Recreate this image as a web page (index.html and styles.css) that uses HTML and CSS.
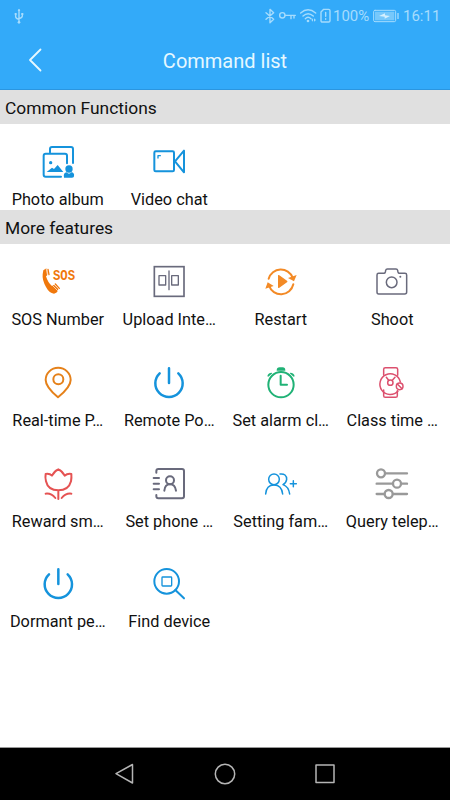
FILE: index.html
```html
<!DOCTYPE html>
<html lang="en">
<head>
    <meta charset="UTF-8">
    <meta name="viewport" content="width=device-width, initial-scale=1.0">
    <title>Command list</title>
    <link rel="stylesheet" href="styles.css">
</head>
<body>

    <!-- Status bar and title -->
    <header class="header">
        <div class="status-bar">
            <svg class="usb" width="10" height="16" viewBox="0 0 30 48"><path d="M15 5V43M5 20V26Q5 31 15 34M25 17V24Q25 29 15 32"/><path class="solid" d="M15 2l4 7h-8zM2 15h6v6h-6zM22 15h6v6h-6z"/><circle class="solid" cx="15" cy="43" r="4"/></svg>
            <div class="status-right">
                <svg width="10" height="16" viewBox="0 0 30 48"><path d="M3 14L26 34L15 44V4L26 14L3 34"/></svg>
                <svg class="key" width="17" height="16" viewBox="0 0 51 48"><circle cx="10" cy="22" r="8"/><path d="M18 22H49M36 22V32M45 22V30"/></svg>
                <svg class="wifi" width="17" height="16" viewBox="0 0 51 48"><path d="M2 15Q24-4 47 15M9 24Q24 10 40 24M16 32Q24 24 33 32"/><circle class="solid" cx="24" cy="39" r="4"/><path class="solid" d="M34 36l5-5v10zM42 31l6 5-6 5z"/></svg>
                <svg class="sim" width="11" height="16" viewBox="0 0 33 48"><path d="M11 4H26Q30 4 30 8V38Q30 42 26 42H7Q3 42 3 38V12ZM17 13V25M17 32V34"/></svg>
                <span class="percent">100%</span>
                <svg class="battery" width="26" height="14" viewBox="0 0 78 42"><rect x="2" y="4" width="66" height="34" rx="4"/><rect class="level" x="6" y="8" width="58" height="26"/><path class="solid" d="M73 12h4v18h-4z"/><path class="bolt" d="M18 21L36 13V19L51 21L35 29V23Z"/></svg>
                <span class="clock">16:11</span>
            </div>
        </div>
        <div class="title-bar">
            <svg class="back" width="14" height="24" viewBox="0 0 14 24"><path d="M12.5 1.5L2 12L12.5 22.5"/></svg>
            <h1>Command list</h1>
        </div>
    </header>

    <main>
        <!-- Common functions -->
        <h2>Common Functions</h2>
        <div class="grid common">
            <div class="item">
                <svg class="icon blue" viewBox="0 0 96 96"><path d="M24 19V9Q24 3 30 3H87Q93 3 93 9V51M57 92H11Q5 92 5 86V29Q5 23 11 23H69Q75 23 75 29V52"/><circle class="fill" cx="26" cy="50" r="5"/><path class="fill" d="M14 78L30 65L36 69L47 57L64 78ZM66 95Q63 80 74 79Q81 87 88 79Q98 80 96 91Q96 95 90 95Z"/><circle class="fill" cx="81" cy="69" r="11"/></svg>
                <span>Photo album</span>
            </div>
            <div class="item">
                <svg class="icon blue" viewBox="0 0 96 96"><rect x="4" y="16" width="59" height="60" rx="4"/><path d="M66 46L93 14V79Z"/><path class="thin" d="M15 36V29H22"/></svg>
                <span>Video chat</span>
            </div>
        </div>

        <!-- More features -->
        <h2>More features</h2>
        <div class="grid more">
            <div class="item">
                <svg class="icon deep-orange" viewBox="0 0 96 96"><path class="fill" d="M4 13L11 8Q14 7 15 11L17 25Q17 28 12 31Q18 51 30 60L36 56L49 69Q47 81 36 83Q22 82 12 63Q0 42 2 25Z"/><path class="cut" d="M13 10L17 29M33 60L47 74"/><path class="thin" d="M18 10L21 26M40 54L52 67"/><text x="33" y="43" textLength="66" lengthAdjust="spacingAndGlyphs">SOS</text></svg>
                <span>SOS Number</span>
            </div>
            <div class="item">
                <svg class="icon gray" viewBox="0 0 96 96"><rect class="frame" x="4" y="2" width="89" height="89"/><path class="thin" d="M18 29H38V57H18ZM56 29H76V57H56ZM48 15V71"/></svg>
                <span>Upload Inte…</span>
            </div>
            <div class="item">
                <svg class="icon orange" viewBox="0 0 96 96"><path d="M11 38A38 38 0 0 1 83 35M85 55A38 38 0 0 1 12 59"/><path class="fill" d="M69 36L95 27L87 46ZM1 68L8 49L26 60ZM39 28Q39 26 43 28L66 44Q69 47 66 49L43 65Q39 67 39 64Z"/></svg>
                <span>Restart</span>
            </div>
            <div class="item">
                <svg class="icon gray thin-line" viewBox="0 0 96 96"><path d="M8 22H24Q27 22 28 18L29 13Q30 9 34 9H60Q64 9 65 13L66 18Q67 22 70 22H87Q92 22 92 27V78Q92 84 86 84H8Q3 84 3 78V27Q3 22 8 22Z"/><circle cx="47" cy="49" r="16"/><circle class="fill" cx="73" cy="32" r="3"/></svg>
                <span>Shoot</span>
            </div>
            <div class="item">
                <svg class="icon amber" viewBox="0 0 96 96"><path d="M48 91Q11 60 11 39A37 36 0 0 1 86 39Q86 60 48 91Z"/><circle cx="49" cy="37" r="15"/></svg>
                <span>Real-time P…</span>
            </div>
            <div class="item">
                <svg class="icon blue power" viewBox="0 0 96 96"><path d="M20 19A41 41 0 1 0 76 19M48 4V48"/></svg>
                <span>Remote Po…</span>
            </div>
            <div class="item">
                <svg class="icon green" viewBox="0 0 96 96"><circle cx="48" cy="53" r="38"/><path d="M47 26V53H66"/><path class="fill" d="M35 11Q35 1 44 1H53Q61 1 61 11ZM7 28Q9 17 20 17L22 19L10 29ZM89 28Q87 17 76 17L74 19L86 29Z"/></svg>
                <span>Set alarm cl…</span>
            </div>
            <div class="item">
                <svg class="icon pink thin-line" viewBox="0 0 96 96"><path d="M23 24V7Q23 2 28 2H60Q65 2 65 7V25M23 69V86Q23 91 28 91H59Q64 91 64 86V71"/><path d="M66 72A31 31 0 1 1 73 45"/><circle cx="43" cy="47" r="8"/><path d="M31 31L38 40M57 31L49 40"/><circle cx="71" cy="58" r="10"/><path d="M64 51L78 65"/></svg>
                <span>Class time …</span>
            </div>
            <div class="item">
                <svg class="icon red" viewBox="0 0 96 96"><path d="M11 18Q23 16 30 23Q37 9 49 4Q61 9 68 23Q76 16 88 18Q89 28 87 40Q80 67 49 67Q18 67 12 40Q9 28 11 18ZM49 67V93M11 77Q28 75 40 90M88 77Q71 75 59 90"/></svg>
                <span>Reward sm…</span>
            </div>
            <div class="item">
                <svg class="icon gray" viewBox="0 0 96 96"><path d="M10 14V9Q10 3 16 3H87Q93 3 93 9V85Q93 91 87 91H16Q10 91 10 85V81M2 30H18M2 47H18M2 64H18"/><circle cx="51" cy="37" r="12"/><path d="M34 68Q36 49 51 49Q66 49 69 68"/></svg>
                <span>Set phone …</span>
            </div>
            <div class="item">
                <svg class="icon blue thin-line" viewBox="0 0 96 96"><circle cx="27" cy="34" r="16"/><path d="M2 78Q4 51 27 51Q50 51 53 78M45 18Q65 16 65 34Q64 44 54 50Q71 56 74 78M76 47H94M85 38V56"/></svg>
                <span>Setting fam…</span>
            </div>
            <div class="item">
                <svg class="icon silver" viewBox="0 0 96 96"><path d="M28 16H93M2 47H50M76 47H93M2 78H25M51 78H93"/><circle cx="15" cy="16" r="12"/><circle cx="63" cy="47" r="12"/><circle cx="38" cy="78" r="12"/></svg>
                <span>Query telep…</span>
            </div>
            <div class="item">
                <svg class="icon blue power" viewBox="0 0 96 96"><path d="M21 19A41 41 0 1 0 77 19M49 4V48"/></svg>
                <span>Dormant pe…</span>
            </div>
            <div class="item">
                <svg class="icon blue" viewBox="0 0 96 96"><circle cx="41" cy="40" r="37"/><path d="M67 66L93 91"/><rect class="thin" x="27" y="27" width="29" height="27" rx="2"/></svg>
                <span>Find device</span>
            </div>
        </div>
    </main>

    <!-- Navigation buttons -->
    <nav class="nav-bar">
        <svg width="24" height="24" viewBox="0 0 24 24"><path d="M19.5 2.5V21L3 11.7Z"/></svg>
        <svg width="24" height="24" viewBox="0 0 24 24"><circle cx="12" cy="12" r="9.7"/></svg>
        <svg width="24" height="24" viewBox="0 0 24 24"><rect x="3" y="3" width="18" height="17.5"/></svg>
    </nav>

</body>
</html>
```
FILE: styles.css
```css
/* General Styles */
body {
    font-family: Roboto, "Liberation Sans", sans-serif;
    background: #fff;
    color: #111;
    margin: 0;
    height: 800px;
    display: flex;
    flex-direction: column;
    overflow: hidden;
}

svg {
    display: block;
    flex-shrink: 0;
    fill: none;
    stroke-linecap: round;
    stroke-linejoin: round;
}

/* Header */
.header {
    height: 90px;
    box-sizing: border-box;
    background: #33aaf9;
    border-bottom: 1px solid #2b96e0;
}

.status-bar {
    height: 31px;
    padding: 0 11px 0 14px;
    display: flex;
    align-items: center;
    justify-content: space-between;
    color: #a6dcfd;
    font-size: 15px;
}

.status-bar svg {
    stroke: #a6dcfd;
    stroke-width: 4.2;
}

.status-bar .solid {
    fill: #a6dcfd;
    stroke: none;
}

.status-right {
    display: flex;
    align-items: center;
}

.key {
    margin-left: 4px;
}

.wifi {
    margin-left: 4px;
}

.sim {
    margin-left: 3px;
}

.percent {
    margin-left: 2px;
    width: 38px;
}

.status-bar .battery {
    margin-left: 2px;
    stroke-width: 3;
}

.battery .level {
    fill: #77c8fb;
    stroke: none;
}

.battery .bolt {
    fill: #d5f0ff;
    stroke: none;
}

.clock {
    margin-left: 4px;
    width: 36px;
}

.title-bar {
    height: 58px;
    padding: 0 28px;
    display: grid;
    grid-template-columns: 14px 1fr 14px;
    align-items: center;
}

.back {
    stroke: #e6f8ff;
    stroke-width: 1.8;
}

h1 {
    margin: 0;
    padding-top: 2px;
    font-size: 20px;
    font-weight: 400;
    text-align: center;
    color: #e6f8ff;
}

/* Section titles */
h2 {
    margin: 0;
    padding-left: 5px;
    height: 34px;
    line-height: 36px;
    background: #e0e0e0;
    font-size: 17.4px;
    font-weight: 400;
}

/* Feature grid */
main {
    flex: 1;
}

.grid {
    display: grid;
    grid-template-columns: repeat(4, 1fr);
    padding: 0 2px;
}

.common {
    height: 63.5px;
    padding-top: 22px;
}

.more {
    grid-auto-rows: 100.75px;
    padding-top: 22.5px;
}

.item {
    display: flex;
    flex-direction: column;
    align-items: center;
    gap: 12px;
    font-size: 16.3px;
    line-height: 20px;
    white-space: nowrap;
}

/* Icons */
.icon {
    width: 32px;
    height: 32px;
    stroke: currentColor;
    stroke-width: 6;
    overflow: visible;
}

.icon .fill {
    fill: currentColor;
    stroke: none;
}

.icon .thin {
    stroke-width: 4;
}

.icon .frame {
    stroke-width: 5;
    stroke-linejoin: miter;
}

.icon .cut {
    stroke: #fff;
    stroke-width: 2;
}

.icon text {
    fill: currentColor;
    stroke: none;
    font-family: "Liberation Mono", monospace;
    font-size: 44px;
    font-weight: bold;
}

.thin-line {
    stroke-width: 4.5;
}

.power {
    stroke-width: 7.5;
}

.blue {
    color: #1593dc;
}

.deep-orange {
    color: #f0780c;
}

.orange {
    color: #f38a26;
}

.amber {
    color: #e5811a;
}

.gray {
    color: #696a7c;
}

.green {
    color: #20b276;
}

.pink {
    color: #dc506e;
}

.red {
    color: #e55353;
}

.silver {
    color: #999;
    stroke-width: 7;
}

/* Navigation bar */
.nav-bar {
    height: 53px;
    box-sizing: border-box;
    border-top: 1px solid #999;
    background: #000;
    display: flex;
    justify-content: center;
    align-items: center;
    gap: 76px;
}

.nav-bar svg {
    stroke: #b5b5b5;
    stroke-width: 1.5;
}
```
